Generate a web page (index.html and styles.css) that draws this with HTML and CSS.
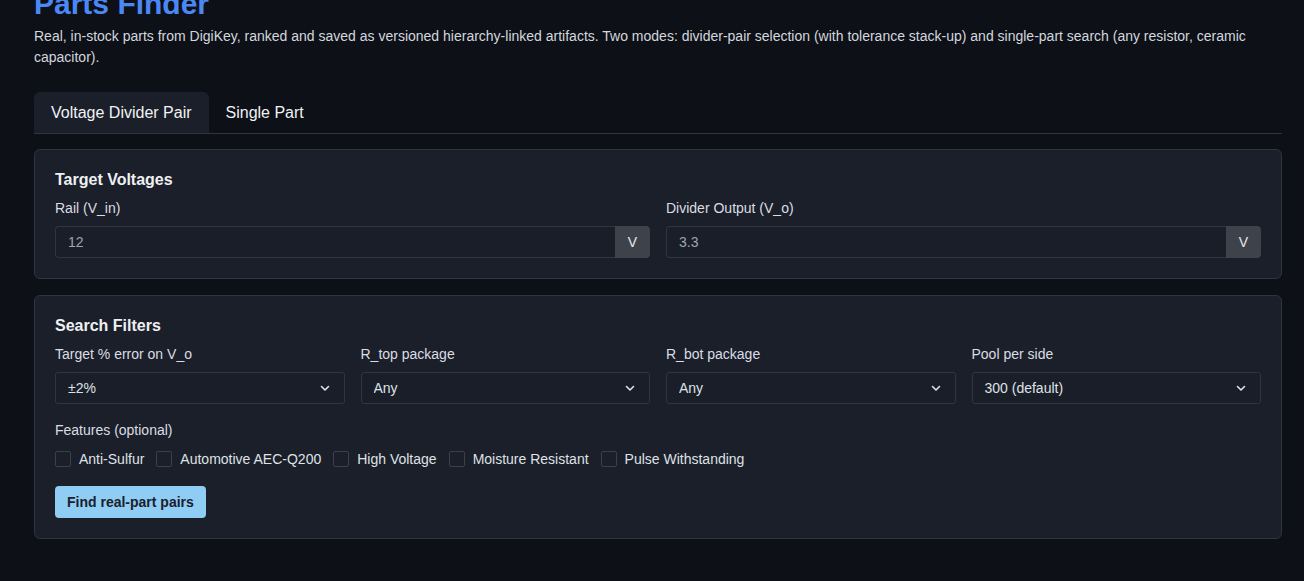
FILE: index.html
```html
<!DOCTYPE html>
<html lang="en">
<head>
  <meta charset="UTF-8">
  <meta name="viewport" content="width=device-width, initial-scale=1.0">
  <title>Parts Finder</title>
  <link rel="stylesheet" href="styles.css">
</head>
<body>
  <div class="page">
    <h1 class="title">Parts Finder</h1>
    <p class="lead">Real, in-stock parts from DigiKey, ranked and saved as versioned hierarchy-linked artifacts. Two modes: divider-pair selection (with tolerance stack-up) and single-part search (any resistor, ceramic capacitor).</p>

    <div class="tabs">
      <button class="tab active">Voltage Divider Pair</button>
      <button class="tab">Single Part</button>
    </div>

    <section class="card">
      <h3 class="card-title">Target Voltages</h3>
      <div class="grid two">
        <div class="field">
          <label>Rail (V_in)</label>
          <div class="input-group">
            <input type="text" value="12">
            <span class="addon">V</span>
          </div>
        </div>
        <div class="field">
          <label>Divider Output (V_o)</label>
          <div class="input-group">
            <input type="text" value="3.3">
            <span class="addon">V</span>
          </div>
        </div>
      </div>
    </section>

    <section class="card">
      <h3 class="card-title">Search Filters</h3>
      <div class="grid four">
        <div class="field">
          <label>Target % error on V_o</label>
          <div class="select-wrap">
            <select><option>±2%</option></select>
            <svg class="chev" width="12" height="12" viewBox="0 0 12 12"><path d="M2.5 4.5 6 8 9.5 4.5" fill="none" stroke="currentColor" stroke-width="1.6" stroke-linecap="round" stroke-linejoin="round"/></svg>
          </div>
        </div>
        <div class="field">
          <label>R_top package</label>
          <div class="select-wrap">
            <select><option>Any</option></select>
            <svg class="chev" width="12" height="12" viewBox="0 0 12 12"><path d="M2.5 4.5 6 8 9.5 4.5" fill="none" stroke="currentColor" stroke-width="1.6" stroke-linecap="round" stroke-linejoin="round"/></svg>
          </div>
        </div>
        <div class="field">
          <label>R_bot package</label>
          <div class="select-wrap">
            <select><option>Any</option></select>
            <svg class="chev" width="12" height="12" viewBox="0 0 12 12"><path d="M2.5 4.5 6 8 9.5 4.5" fill="none" stroke="currentColor" stroke-width="1.6" stroke-linecap="round" stroke-linejoin="round"/></svg>
          </div>
        </div>
        <div class="field">
          <label>Pool per side</label>
          <div class="select-wrap">
            <select><option>300 (default)</option></select>
            <svg class="chev" width="12" height="12" viewBox="0 0 12 12"><path d="M2.5 4.5 6 8 9.5 4.5" fill="none" stroke="currentColor" stroke-width="1.6" stroke-linecap="round" stroke-linejoin="round"/></svg>
          </div>
        </div>
      </div>

      <div class="features-label">Features (optional)</div>
      <div class="checks">
        <label class="check"><span class="box"></span>Anti-Sulfur</label>
        <label class="check"><span class="box"></span>Automotive AEC-Q200</label>
        <label class="check"><span class="box"></span>High Voltage</label>
        <label class="check"><span class="box"></span>Moisture Resistant</label>
        <label class="check"><span class="box"></span>Pulse Withstanding</label>
      </div>

      <button class="btn-primary">Find real-part pairs</button>
    </section>
  </div>
</body>
</html>
```

FILE: styles.css
```css
html, body { margin: 0; padding: 0; background: #0d1017; }
body { font-family: "Liberation Sans", Arial, sans-serif; color: #e2e5ea; font-size: 14px; overflow: hidden; }
.page { padding: 0 22px 40px 34px; }

.title { margin: -14px 0 0; font-size: 30px; line-height: 36px; font-weight: 700; color: #4b88f4; }
.lead { margin: 4px 0 0; font-size: 14px; line-height: 21px; color: #d3d7de; }

.tabs { display: flex; margin-top: 24px; border-bottom: 1px solid #30353f; }
.tab { font-family: inherit; font-size: 16px; color: #f0f2f5; background: transparent; border: none; height: 41px; padding: 0 17px; border-radius: 6px 6px 0 0; cursor: pointer; }
.tab.active { background: #1b1f29; }

.card { margin-top: 16px; background: #1b1f29; border: 1px solid #2e3440; border-radius: 6px; padding: 20px; }
.tabs + .card { margin-top: 15px; }
.card-title { margin: 0 0 8px; font-size: 16px; line-height: 20px; font-weight: 700; color: #eef0f3; }

.grid { display: grid; gap: 16px; }
.grid.two { grid-template-columns: 1fr 1fr; }
.grid.four { grid-template-columns: repeat(4, 1fr); }

.field label { display: block; font-size: 14px; line-height: 20px; color: #dadde3; margin-bottom: 8px; }

.input-group { display: flex; height: 32px; }
.input-group input { flex: 1; min-width: 0; box-sizing: border-box; height: 32px; background: #1a1e28; border: 1px solid #2f3542; border-right: none; border-radius: 4px 0 0 4px; padding: 0 12px; font-family: inherit; font-size: 14px; color: #9fa5ae; outline: none; }
.addon { width: 35px; display: flex; align-items: center; justify-content: center; background: #3e424b; color: #e6e8ec; font-size: 14px; border-radius: 0 4px 4px 0; }

.select-wrap { position: relative; height: 32px; }
.select-wrap select { appearance: none; -webkit-appearance: none; width: 100%; height: 32px; box-sizing: border-box; background: #1a1e28; border: 1px solid #2f3542; border-radius: 3px; padding: 0 12px; font-family: inherit; font-size: 14px; color: #dfe2e7; outline: none; }
.chev { position: absolute; right: 14px; top: 10px; color: #e0e3e8; pointer-events: none; }

.features-label { margin-top: 16px; font-size: 14px; line-height: 20px; color: #dadde3; }
.checks { display: flex; gap: 12px; margin-top: 9px; height: 20px; align-items: center; }
.check { display: flex; align-items: center; gap: 8px; font-size: 14px; color: #dfe2e7; }
.box { width: 14px; height: 14px; border: 1px solid #3b404b; border-radius: 2px; }

.btn-primary { display: block; margin-top: 17px; height: 32px; padding: 0 12px; background: #90cdf4; color: #1a202c; border: none; border-radius: 4px; font-family: inherit; font-size: 14px; font-weight: 700; cursor: pointer; }
```
